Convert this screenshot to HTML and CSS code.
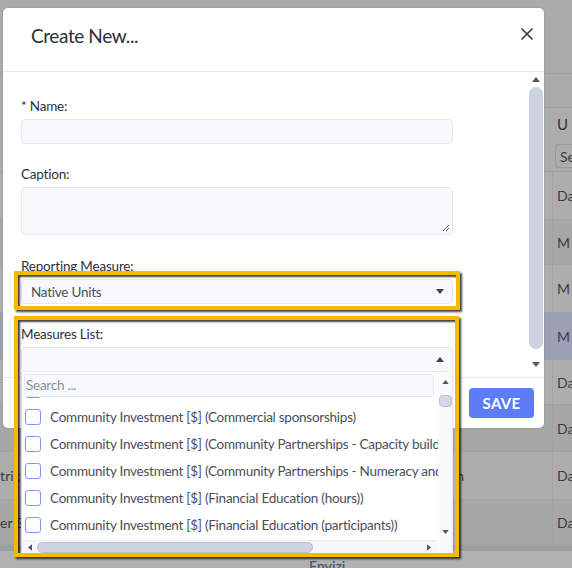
FILE: index.html
```html
<!DOCTYPE html>
<html>
<head>
<meta charset="utf-8">
<title>Create New</title>
<link rel="stylesheet" href="styles.css">
</head>
<body>
<div class="page">
  <div class="pg-top"></div>
  <div class="pg-sub"></div>
  <div class="pg-head"><div class="lc"></div><div class="rc hc">U</div></div>
  <div class="pg-filter"><div class="lc"></div><div class="rc"><span class="fsel">Se</span></div></div>
  <div class="row light h48"><div class="lc"></div><div class="rc">Da</div></div>
  <div class="row dark h45"><div class="lc"></div><div class="rc">M</div></div>
  <div class="row light h48"><div class="lc"></div><div class="rc">M</div></div>
  <div class="row hl h47"><div class="lc"></div><div class="rc">M</div></div>
  <div class="row light h45"><div class="lc"></div><div class="rc">Da</div></div>
  <div class="row dark h47"><div class="lc"></div><div class="rc">Da</div></div>
  <div class="row light h48"><div class="lc"><span class="ltxt">Metric</span><span class="mtxt">h</span></div><div class="rc">Da</div></div>
  <div class="row dark h45"><div class="lc"><span class="ltxt2">User Sector</span></div><div class="rc">Da</div></div>
  <div class="pg-band"></div>
  <div class="pg-foot"><span class="brand">Envizi</span></div>
</div>

<div class="modal">
  <div class="m-head">
    <h2 class="m-title">Create New...</h2>
    <svg class="m-close" width="12" height="12" viewBox="0 0 12 12"><path d="M1 1L11 11M11 1L1 11" stroke="#3a3e4b" stroke-width="1.7" stroke-linecap="round"/></svg>
  </div>
  <div class="m-body">
    <div class="m-content">
      <div class="group">
        <label class="lbl">* Name:</label>
        <div class="inp"></div>
      </div>
      <div class="group g-ta">
        <label class="lbl">Caption:</label>
        <div class="ta">
          <svg class="grip" width="9" height="9" viewBox="0 0 9 9"><path d="M8 2L2 8M8 5L5 8" stroke="#555" stroke-width="1"/></svg>
        </div>
      </div>
      <div class="group">
        <label class="lbl">Reporting Measure:</label>
        <div class="inp sel"><span>Native Units</span>
          <svg width="8" height="5" viewBox="0 0 8 5"><path d="M0 0H8L4 5Z" fill="#3f4350"/></svg>
        </div>
      </div>
      <div class="group">
        <label class="lbl">Measures List:</label>
        <div class="inp sel multi">
          <svg width="8" height="5" viewBox="0 0 8 5"><path d="M0 5H8L4 0Z" fill="#3f4350"/></svg>
        </div>
      </div>
    </div>
    <div class="vbar">
      <svg class="arr" width="8" height="5" viewBox="0 0 8 5"><path d="M0 5H8L4 0Z" fill="#505562"/></svg>
      <div class="vthumb"></div>
      <svg class="arr" width="8" height="5" viewBox="0 0 8 5"><path d="M0 0H8L4 5Z" fill="#505562"/></svg>
    </div>
  </div>
  <div class="m-foot">
    <button class="save">SAVE</button>
  </div>

  <div class="dd">
    <div class="dd-top">
      <div class="dd-main">
        <div class="search">Search ...</div>
        <div class="list">
          <div class="items">
            <div class="item"><span class="cb"></span><span class="it">Community Investment [$] (Cash donations)</span></div>
            <div class="item"><span class="cb"></span><span class="it">Community Investment [$] (Commercial sponsorships)</span></div>
            <div class="item"><span class="cb"></span><span class="it">Community Investment [$] (Community Partnerships - Capacity building)</span></div>
            <div class="item"><span class="cb"></span><span class="it">Community Investment [$] (Community Partnerships - Numeracy and literacy)</span></div>
            <div class="item"><span class="cb"></span><span class="it">Community Investment [$] (Financial Education (hours))</span></div>
            <div class="item"><span class="cb"></span><span class="it">Community Investment [$] (Financial Education (participants))</span></div>
            <div class="item"><span class="cb"></span><span class="it">Community Investment [$] (In-kind donations)</span></div>
          </div>
        </div>
      </div>
      <div class="dd-vbar">
        <svg class="arr" width="7" height="4" viewBox="0 0 8 5"><path d="M0 5H8L4 0Z" fill="#505562"/></svg>
        <div class="dd-vthumb"></div>
        <div class="spacer"></div>
        <svg class="arr" width="7" height="4" viewBox="0 0 8 5"><path d="M0 0H8L4 5Z" fill="#505562"/></svg>
      </div>
    </div>
    <div class="dd-hbar">
      <div class="hb-track">
        <svg class="harr" width="4" height="7" viewBox="0 0 5 8"><path d="M5 0V8L0 4Z" fill="#505562"/></svg>
        <div class="hthumb"></div>
        <div class="spacer"></div>
        <svg class="harr" width="4" height="7" viewBox="0 0 5 8"><path d="M0 0V8L5 4Z" fill="#505562"/></svg>
      </div>
      <div class="corner"></div>
    </div>
  </div>
</div>

<div class="annot a1"></div>
<div class="annot a2"></div>
</body>
</html>
```

FILE: styles.css
```css
* { box-sizing: border-box; }
html, body { margin: 0; padding: 0; }
body {
  width: 572px;
  height: 568px;
  overflow: hidden;
  position: relative;
  background: #acacac;
  font-family: "Lato", "Open Sans", sans-serif;
  color: #2d313c;
}

/* background page (under the overlay) */
.page { width: 572px; }
.pg-top { height: 74px; background: #ababab; border-bottom: 1px solid #a0a0a6; }
.pg-sub { height: 34px; background: #ababab; border-bottom: 1px solid #a0a0a6; }
.pg-head, .pg-filter, .row {
  display: grid;
  grid-template-columns: 552px 1fr;
}
.pg-head { height: 32px; background: #acacac; }
.pg-filter { height: 32px; background: #acacac; border-bottom: 1px solid #a0a0a4; }
.rc {
  display: flex;
  align-items: center;
  padding-left: 4px;
  font-size: 14px;
  color: #3a3b42;
  white-space: nowrap;
  overflow: hidden;
}
.hc { padding-left: 5px; font-size: 15px; color: #2f3036; }
.pg-filter .rc { padding-left: 3px; }
.fsel {
  display: block;
  height: 24px;
  width: 40px;
  border: 1px solid #9a9ca3;
  border-right: none;
  border-radius: 4px 0 0 4px;
  padding: 3px 0 0 4px;
  font-size: 14px;
  color: #3a3b42;
}
.row { border-bottom: 1px solid #a3a3a6; }
.row .rc { border-left: 1px solid #a3a3a6; }
.row.light { background: #adadad; }
.row.dark { background: #a7a7a7; }
.row.hl { background: #9d9fb5; }
.h45 { height: 45px; }
.h47 { height: 47px; }
.h48 { height: 48px; }
.lc {
  position: relative;
  display: flex;
  align-items: center;
  overflow: hidden;
  font-size: 14px;
  color: #3a3b42;
  white-space: nowrap;
}
.ltxt { margin-left: -20px; }
.mtxt { margin-left: 436px; }
.ltxt2 { margin-left: -16px; }
.pg-band { height: 6px; background: #9e9e9e; }
.pg-foot {
  height: 30px;
  background: #b1b1b1;
  padding-left: 309px;
  padding-top: 4px;
}
.brand { font-size: 14px; font-weight: 600; color: #4d556a; }

/* modal */
.modal {
  position: absolute;
  left: 3px;
  top: 8px;
  width: 541px;
  height: 420px;
  background: #fff;
  border-radius: 5px;
  box-shadow: 0 0 2px rgba(0,0,0,0.15);
}
.m-head {
  height: 64px;
  border-bottom: 1px solid #e4e6ee;
  display: flex;
  align-items: flex-start;
  justify-content: space-between;
  padding: 15px 11px 0 28px;
}
.m-title {
  margin: 0;
  font-size: 19px;
  letter-spacing: -0.4px;
  line-height: 26px;
  font-weight: 400;
  color: #2b2f3a;
}
.m-close { margin-top: 5px; }

.m-body {
  height: 305px;
  display: flex;
}
.m-content {
  flex: 1;
  padding: 25px 0 0 18px;
}
.group { margin-bottom: 21px; }
.g-ta { margin-bottom: 22px; }
.lbl {
  display: block;
  font-size: 13.5px;
  letter-spacing: -0.2px;
  line-height: 18px;
  margin-bottom: 4px;
  color: #2d313c;
}
.inp {
  width: 432px;
  height: 25px;
  background: #f8f9fc;
  border: 1px solid #e6e9f1;
  border-radius: 4px;
}
.ta {
  width: 432px;
  height: 48px;
  background: #f8f9fc;
  border: 1px solid #e6e9f1;
  border-radius: 4px;
  display: flex;
  align-items: flex-end;
  justify-content: flex-end;
  padding: 0 2px 2px 0;
}
.grip { display: block; }
.sel {
  display: flex;
  align-items: center;
  justify-content: space-between;
  padding: 0 8px 0 9px;
  font-size: 13.5px;
  letter-spacing: -0.25px;
  color: #4a4e5a;
}
.multi { justify-content: flex-end; }
.vbar {
  width: 14px;
  margin-right: 1px;
  display: flex;
  flex-direction: column;
  align-items: center;
  padding-top: 5px;
}
.vbar .arr { display: block; flex: none; }
.vthumb {
  width: 14px;
  height: 262px;
  margin: 5px 0 13px;
  background: #cdd3e0;
  border-radius: 7px;
}
.m-foot {
  height: 51px;
  border-top: 1px solid #e4e6ee;
  display: flex;
  justify-content: flex-end;
  align-items: center;
  padding-right: 10px;
}
.save {
  width: 65px;
  height: 30px;
  border: none;
  border-radius: 4px;
  background: #5c7cf9;
  color: #fff;
  font-family: inherit;
  font-size: 15px;
  font-weight: 700;
  letter-spacing: 0.3px;
  padding: 0;
}

/* dropdown panel (popup) */
.dd {
  position: absolute;
  left: 18px;
  top: 364px;
  width: 432px;
  height: 182px;
  background: #fff;
  border: 1px solid #e3e6ee;
  border-top: none;
  display: flex;
  flex-direction: column;
}
.dd-top { display: flex; height: 168px; }
.dd-main { width: 416px; display: flex; flex-direction: column; }
.search {
  margin: 2px 0 0 2px;
  width: 410px;
  height: 23px;
  background: #f8f9fc;
  border: 1px solid #e6e9f1;
  border-radius: 3px;
  font-size: 13.5px;
  letter-spacing: -0.25px;
  line-height: 21px;
  padding-left: 1px;
  color: #8b8f9a;
}
.list { flex: 1; overflow: hidden; }
.items { margin-top: -21px; }
.item {
  height: 27px;
  display: flex;
  align-items: flex-start;
  padding: 6px 0 0 3px;
  white-space: nowrap;
}
.cb {
  flex: none;
  width: 16px;
  height: 16px;
  border: 1.5px solid #7f96f4;
  border-radius: 3px;
  background: #fff;
}
.it {
  margin-left: 9px;
  font-size: 13.5px;
  letter-spacing: -0.25px;
  line-height: 16px;
  color: #4a4e5a;
}
.dd-vbar {
  width: 15px;
  background: #fbfbfc;
  display: flex;
  flex-direction: column;
  align-items: center;
  padding: 8px 0 6px;
}
.dd-vbar .arr, .harr { display: block; flex: none; }
.spacer { flex: 1; }
.dd-vthumb {
  width: 13px;
  height: 12px;
  margin-top: 11px;
  background: #d3d8e2;
  border: 1px solid #b9bfcc;
  border-radius: 4px;
}
.dd-hbar { display: flex; height: 13px; }
.hb-track {
  width: 416px;
  background: #f6f7f9;
  border-top: 1px solid #eceef2;
  display: flex;
  align-items: center;
  padding: 0 6px 0 6px;
}
.hthumb {
  width: 276px;
  height: 11px;
  margin-left: 5px;
  background: #ccd4e2;
  border: 1px solid #b8bfcd;
  border-radius: 6px;
}
.corner { width: 15px; background: #fbfbfc; }

/* screenshot annotation boxes */
.annot {
  position: absolute;
  border: 4px solid #fab800;
  box-shadow: 2px 2px 2px rgba(0,0,0,0.75), inset 2px 2px 2px rgba(0,0,0,0.75);
  pointer-events: none;
}
.a1 { left: 14px; top: 271px; width: 446px; height: 39px; }
.a2 { left: 14px; top: 316px; width: 445px; height: 241px; }
```
